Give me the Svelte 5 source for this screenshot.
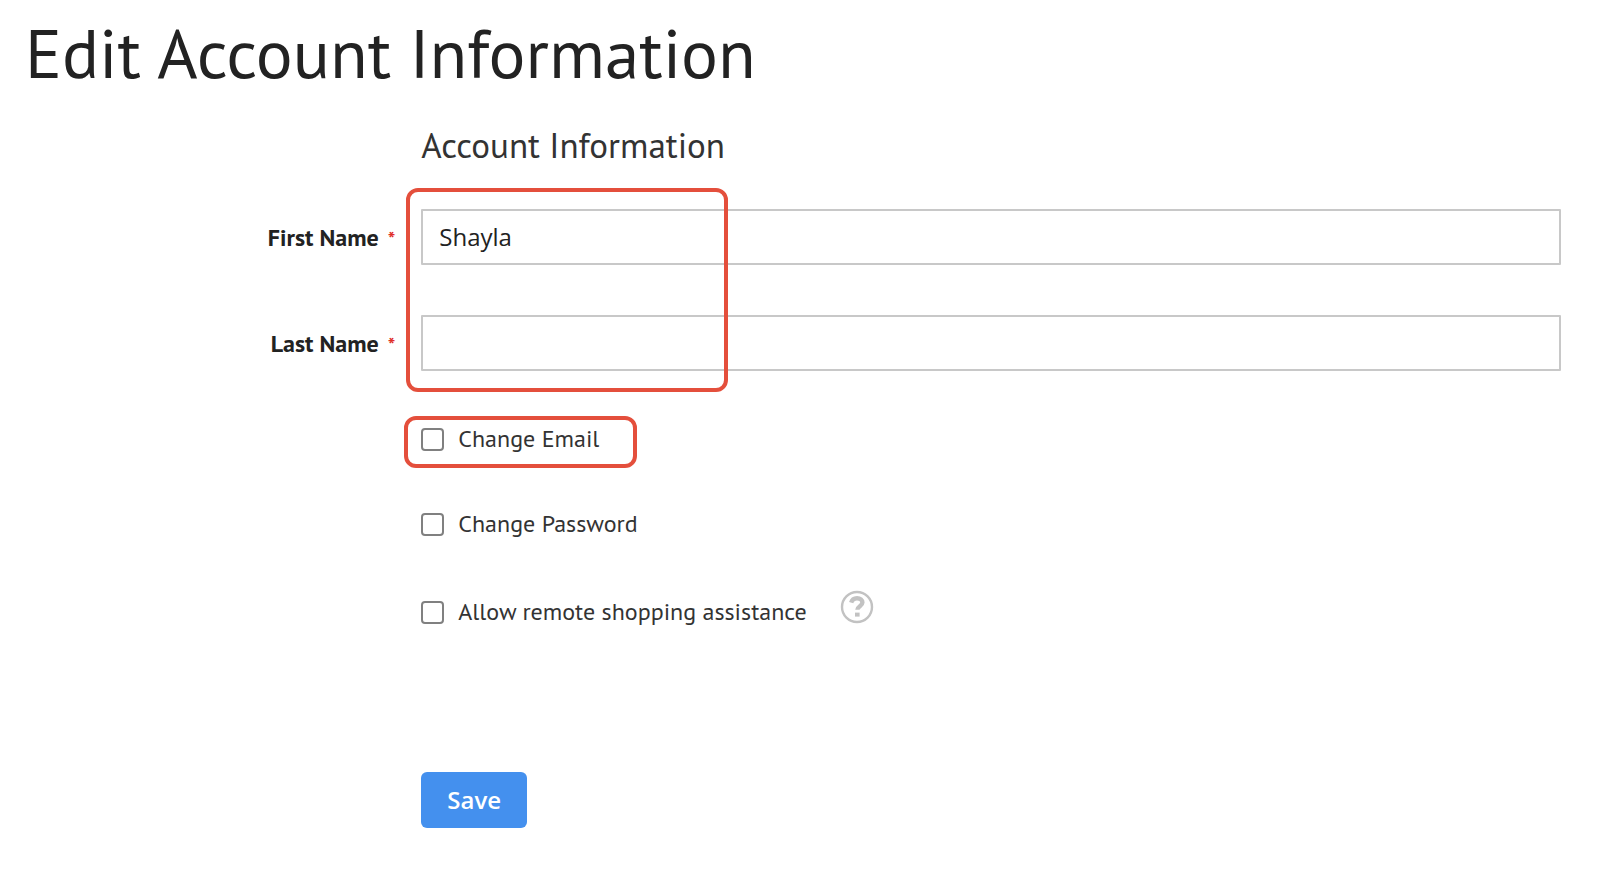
<script lang="ts">
  let firstName = $state('Shayla')
  let lastName = $state('')
  let changeEmail = $state(false)
  let changePassword = $state(false)
  let allowAssistance = $state(false)
</script>

<main class="page">
  <h1>Edit Account Information</h1>

  <form class="form" onsubmit={(e) => e.preventDefault()}>
    <h2>Account Information</h2>

    <div class="names">
      <div class="field">
        <label for="firstname">First Name <span class="required">*</span></label>
        <input id="firstname" type="text" bind:value={firstName} required />
      </div>
      <div class="field">
        <label for="lastname">Last Name <span class="required">*</span></label>
        <input id="lastname" type="text" bind:value={lastName} required />
      </div>
      <div class="highlight highlight-names"></div>
    </div>

    <div class="choices">
      <div class="choice">
        <input id="change-email" type="checkbox" bind:checked={changeEmail} />
        <label for="change-email">Change Email</label>
        <div class="highlight highlight-email"></div>
      </div>
      <div class="choice">
        <input id="change-password" type="checkbox" bind:checked={changePassword} />
        <label for="change-password">Change Password</label>
      </div>
      <div class="choice assistance">
        <input id="assistance" type="checkbox" bind:checked={allowAssistance} />
        <label for="assistance">Allow remote shopping assistance</label>
        <button class="help" type="button" aria-label="What is this?">
          <svg viewBox="0 0 34 34" width="34" height="34" fill="none" stroke="#c2c2c2">
            <circle cx="17" cy="17" r="15" stroke-width="2.4" />
            <path d="M11.2 12.6C12 9.6 14 8.2 17 8.2c3.4 0 5.4 1.7 5.4 4.3 0 3.7-5 3.7-5 7.3" stroke-width="4.4" />
            <path d="M15 24.6h4.6" stroke-width="4" />
          </svg>
        </button>
      </div>
    </div>

    <button class="save" type="submit">Save</button>
  </form>
</main>

<style>
  :global(body) {
    margin: 0;
    background: #fff;
  }

  .page {
    padding: 9px 56px 53px 25px;
    font-family: 'PT Sans', 'Noto Sans', sans-serif;
    font-size: 24px;
    line-height: 32px;
    color: #333;
  }

  h1 {
    margin: 0 0 30px;
    font-size: 69px;
    font-weight: 400;
    line-height: 88px;
    color: #222;
  }

  .form {
    --label-column: 25.8%;
  }

  h2 {
    margin: 0 0 46px var(--label-column);
    font-size: 35px;
    font-weight: 400;
    line-height: 36px;
  }

  .names {
    position: relative;
    display: flex;
    flex-direction: column;
    gap: 50px;
  }

  .field {
    display: grid;
    grid-template-columns: var(--label-column) 1fr;
    align-items: center;
  }

  .field label {
    padding: 2px 26px 0 0;
    text-align: right;
    font-weight: 700;
    color: #222;
  }

  .required {
    margin-left: 3px;
    font-size: 20px;
    color: #e02b27;
  }

  .field input {
    box-sizing: border-box;
    width: 100%;
    height: 56px;
    padding: 0 16px 2px;
    border: 2px solid #c8c8c8;
    border-radius: 1px;
    background: #fff;
    font-family: 'Open Sans', sans-serif;
    font-size: 24px;
    color: #222;
  }

  .choices {
    display: flex;
    flex-direction: column;
    gap: 53px;
    margin: 52px 0 0 var(--label-column);
  }

  .choice {
    position: relative;
    display: flex;
    align-items: center;
  }

  .choice input {
    box-sizing: border-box;
    appearance: none;
    width: 23px;
    height: 23px;
    margin: 0 14px 0 0;
    border: 2px solid #808080;
    border-radius: 4px;
    background: #fff;
  }

  .choice input:checked {
    background: #4490ee;
  }

  .assistance {
    margin-top: 3px;
  }

  .help {
    display: flex;
    margin: -10px 0 0 33px;
    padding: 0;
    border: 0;
    background: none;
    cursor: pointer;
  }

  .save {
    margin: 144px 0 0 var(--label-column);
    padding: 12px 26px;
    border: 0;
    border-radius: 6px;
    background: #4490ee;
    font-family: 'Open Sans', sans-serif;
    font-size: 24px;
    font-weight: 600;
    line-height: 32px;
    color: #fff;
    cursor: pointer;
  }

  .highlight {
    position: absolute;
    box-sizing: border-box;
    border: 4px solid #e44f3c;
    border-radius: 12px;
    pointer-events: none;
  }

  .highlight-names {
    inset: -21px auto -21px calc(var(--label-column) - 15px);
    width: 322px;
  }

  .highlight-email {
    top: -7px;
    left: -17px;
    width: 233px;
    height: 52px;
  }
</style>
